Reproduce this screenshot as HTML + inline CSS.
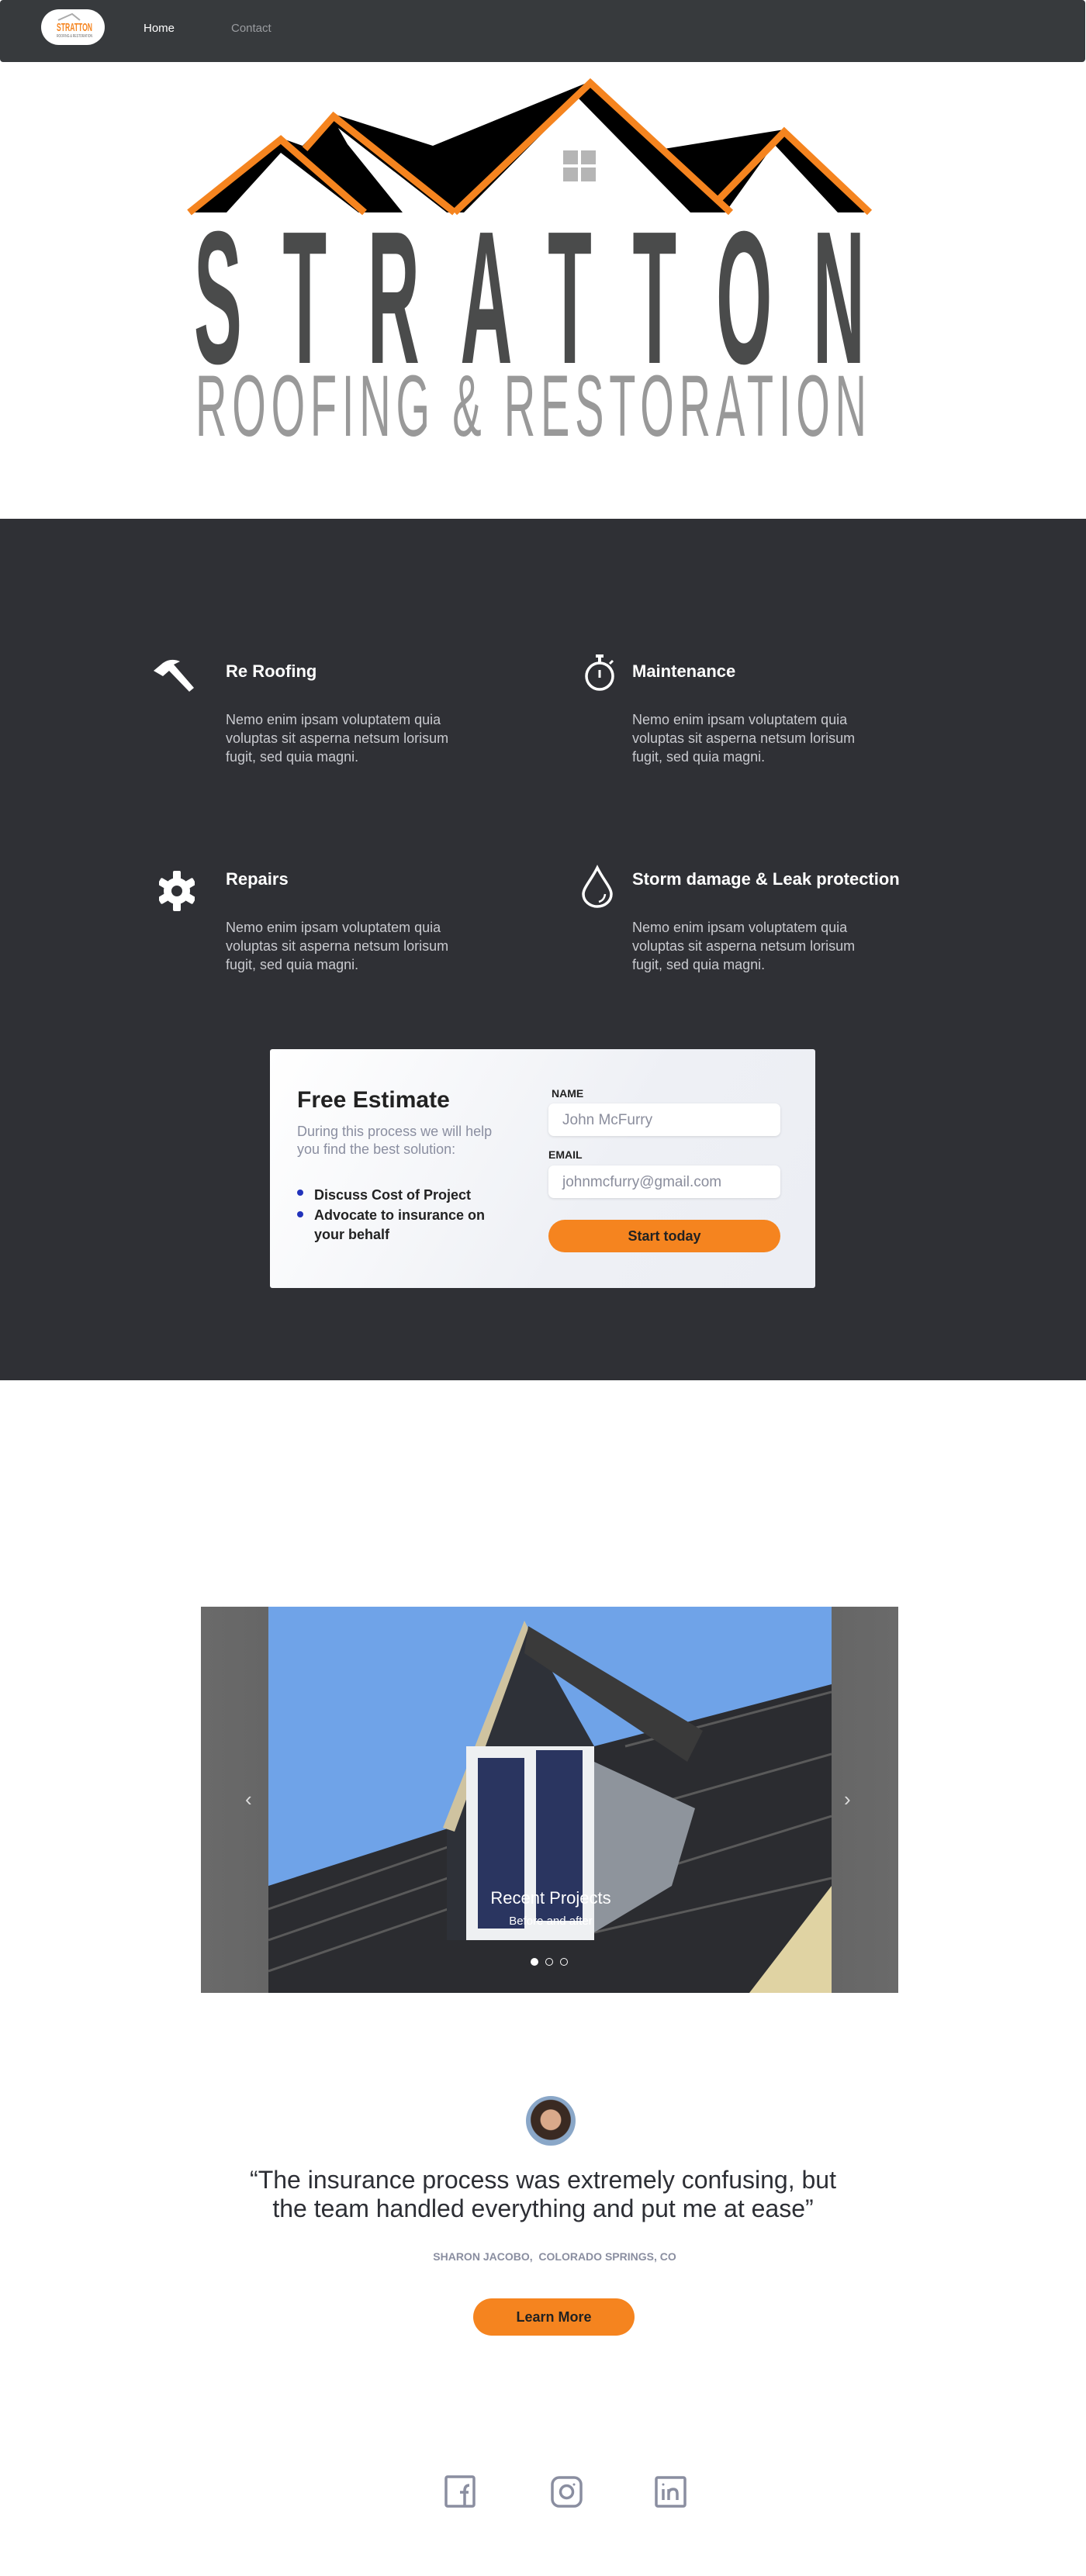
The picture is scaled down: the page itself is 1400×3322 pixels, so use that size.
<!DOCTYPE html>
<html><head><meta charset="utf-8">
<style>
*{margin:0;padding:0;box-sizing:border-box}
body{width:1400px;height:3322px;background:#fff;font-family:"Liberation Sans",sans-serif;position:relative;overflow:hidden}
.abs{position:absolute}
nav{position:absolute;left:0;top:0;width:1399px;height:80px;background:#373a3d;border-radius:4px}
.pill{position:absolute;left:53px;top:12px;width:82px;height:46px;background:#fff;border-radius:23px}
.dark{position:absolute;left:0;top:669px;width:1400px;height:1111px;background:#2f3035}
.t{position:absolute;color:#fff;font-weight:bold;font-size:22px}
.b{position:absolute;color:#c9cacf;font-size:18px;line-height:24px;width:322px}
.card{position:absolute;left:348px;top:1353px;width:703px;height:308px;border-radius:3px;background:linear-gradient(120deg,#ffffff 0%,#eef0f5 60%,#eceef4 100%)}
.inp{position:absolute;left:359px;width:299px;height:42px;background:#fff;border-radius:7px;box-shadow:0 1px 3px rgba(0,0,0,.12);color:#8a8d9c;font-size:19px;padding:11px 18px}
.lbl{position:absolute;font-size:14px;font-weight:bold;color:#222}
.btn{position:absolute;background:#f5841f;border-radius:22px;color:#222;font-weight:bold;text-align:center}
</style></head><body>
<nav>
<div class="pill"><svg width="82" height="46"><path d="M22 14 L40 6 L50 14" stroke="#aaa" stroke-width="2" fill="none"/><text x="20" y="28" font-size="15" font-weight="bold" fill="#f5841f" font-family="Liberation Sans Narrow,Liberation Sans" textLength="46" lengthAdjust="spacingAndGlyphs">STRATTON</text><text x="20" y="36" font-size="5" fill="#666" textLength="46" lengthAdjust="spacingAndGlyphs">ROOFING &amp; RESTORATION</text></svg></div>
<div class="abs" style="left:185px;top:28px;color:#fff;font-size:15px">Home</div>
<div class="abs" style="left:298px;top:28px;color:#9a9ca0;font-size:15px">Contact</div>
</nav>

<svg class="abs" style="left:0;top:0" width="1400" height="600">
<polygon points="244,274 362,178 390,188 430,147 558,188 761,105 856,192 1011,167 1121,274" fill="#000"/>
<polygon points="292,274 362,197 462,274" fill="#fff"/>
<polygon points="436,165 448,186 519,274 576,274" fill="#fff"/>
<polygon points="598,274 745,126 890,274" fill="#fff"/>
<polygon points="935,274 998,186 1080,274" fill="#fff"/>
<g fill="none" stroke="#f5841f" stroke-width="9" stroke-linejoin="miter">
<polyline points="244,274 362,180 470,274"/>
<polyline points="393,192 430,150 586,274"/>
<polyline points="586,274 761,107 942,274"/>
<polyline points="924,260 1011,170 1121,274"/>
</g>
<g fill="#b5b5b5"><rect x="726" y="194" width="19" height="18"/><rect x="749" y="194" width="19" height="18"/><rect x="726" y="216" width="19" height="18"/><rect x="749" y="216" width="19" height="18"/></g>
<g transform="translate(250,468) scale(0.38,1)"><text x="0" y="0" font-size="244" font-weight="bold" fill="#4a4b4b" textLength="2276" lengthAdjust="spacing">STRATTON</text></g>
<g transform="translate(252,562) scale(0.5,1)"><text x="0" y="0" font-size="112" fill="#999" textLength="1730" lengthAdjust="spacing">ROOFING &amp; RESTORATION</text></g>
</svg>

<div class="dark"></div>
<svg class="abs" style="left:190px;top:845px" width="70" height="60"><path d="M8 20 L20 10 Q30 3 42 8 L34 12 L60 42 L54 47 L28 20 L20 27 Z" fill="#fff"/></svg>
<svg class="abs" style="left:748px;top:842px" width="50" height="52"><circle cx="25" cy="30" r="17" stroke="#fff" stroke-width="3.5" fill="none"/><rect x="20" y="2" width="10" height="4" fill="#fff"/><rect x="23" y="5" width="4" height="8" fill="#fff"/><rect x="23.5" y="22" width="3" height="10" fill="#fff"/><path d="M38 14 l4 -4" stroke="#fff" stroke-width="3"/></svg>
<svg class="abs" style="left:205px;top:1122px" width="46" height="54"><g transform="translate(23,27)" fill="#fff"><circle r="17"/><g><rect x="-5" y="-26" width="10" height="12" rx="2"/><rect x="-5" y="14" width="10" height="12" rx="2"/><rect x="-5" y="-26" width="10" height="12" rx="2" transform="rotate(60)"/><rect x="-5" y="-26" width="10" height="12" rx="2" transform="rotate(120)"/><rect x="-5" y="-26" width="10" height="12" rx="2" transform="rotate(-60)"/><rect x="-5" y="-26" width="10" height="12" rx="2" transform="rotate(-120)"/></g><circle r="7" fill="#2f3035"/></g></svg>
<svg class="abs" style="left:748px;top:1115px" width="44" height="56"><path d="M22 4 C14 20 4 30 4 38 A18 16 0 0 0 40 38 C40 30 30 20 22 4 Z" stroke="#fff" stroke-width="3.5" fill="none"/><path d="M32 38 Q31 46 24 48" stroke="#fff" stroke-width="2.5" fill="none"/></svg>
<div class="t" style="left:291px;top:853px">Re Roofing</div>
<div class="b" style="left:291px;top:916px">Nemo enim ipsam voluptatem quia voluptas sit asperna netsum lorisum fugit, sed quia magni.</div>
<div class="t" style="left:815px;top:853px">Maintenance</div>
<div class="b" style="left:815px;top:916px">Nemo enim ipsam voluptatem quia voluptas sit asperna netsum lorisum fugit, sed quia magni.</div>
<div class="t" style="left:291px;top:1121px">Repairs</div>
<div class="b" style="left:291px;top:1184px">Nemo enim ipsam voluptatem quia voluptas sit asperna netsum lorisum fugit, sed quia magni.</div>
<div class="t" style="left:815px;top:1121px">Storm damage &amp; Leak protection</div>
<div class="b" style="left:815px;top:1184px">Nemo enim ipsam voluptatem quia voluptas sit asperna netsum lorisum fugit, sed quia magni.</div>

<div class="card">
<div class="abs" style="left:35px;top:49px;font-size:30px;font-weight:bold;color:#222">Free Estimate</div>
<div class="abs" style="left:35px;top:95px;font-size:18px;line-height:23px;color:#8a8ea0;width:265px">During this process we will help you find the best solution:</div>
<div class="abs" style="left:35px;top:181px;width:8px;height:8px;border-radius:50%;background:#2233bb"></div>
<div class="abs" style="left:35px;top:209px;width:8px;height:8px;border-radius:50%;background:#2233bb"></div>
<div class="abs" style="left:57px;top:175px;font-size:18px;font-weight:bold;color:#222;line-height:27px;width:260px">Discuss Cost of Project</div>
<div class="abs" style="left:57px;top:202px;font-size:18px;font-weight:bold;color:#222;line-height:25px;width:250px">Advocate to insurance on your behalf</div>
<div class="lbl" style="left:363px;top:49px">NAME</div>
<div class="inp" style="top:70px">John McFurry</div>
<div class="lbl" style="left:359px;top:128px">EMAIL</div>
<div class="inp" style="top:150px">johnmcfurry@gmail.com</div>
<div class="btn" style="left:359px;top:220px;width:299px;height:42px;line-height:42px;font-size:18px">Start today</div>
</div>

<div class="abs" style="left:259px;top:2072px;width:899px;height:498px;background:linear-gradient(90deg,#6a6a6a,#555 50%,#6a6a6a)"></div>
<svg class="abs" style="left:346px;top:2072px" width="726" height="498">
<rect width="726" height="498" fill="#6fa3e8"/>
<polygon points="0,360 0,498 726,498 726,100 420,180 250,280" fill="#2b2c30"/>
<g stroke="#5a5a5a" stroke-width="3"><line x1="0" y1="390" x2="260" y2="300"/><line x1="0" y1="430" x2="260" y2="340"/><line x1="0" y1="470" x2="260" y2="380"/><line x1="460" y1="180" x2="726" y2="110"/><line x1="480" y1="260" x2="726" y2="190"/><line x1="500" y1="340" x2="726" y2="270"/><line x1="420" y1="420" x2="726" y2="350"/></g>
<polygon points="230,280 330,20 420,180 420,430 230,430" fill="#2e3138"/>
<polygon points="225,285 330,18 335,28 240,290" fill="#cfc3a0"/>
<polygon points="335,25 560,160 540,200 330,60" fill="#3a3a3a"/>
<polygon points="420,200 550,260 520,360 420,420" fill="#8e949c"/>
<rect x="255" y="180" width="165" height="250" fill="#eef0f2"/>
<rect x="270" y="195" width="60" height="220" fill="#2a3560"/><rect x="345" y="185" width="60" height="220" fill="#2a3560"/>
<polygon points="620,498 726,360 726,498" fill="#e0d3a3"/>
</svg>
<div class="abs" style="left:560px;top:2435px;width:300px;text-align:center;color:#fff;font-size:22px">Recent Projects</div>
<div class="abs" style="left:560px;top:2469px;width:300px;text-align:center;color:#fff;font-size:15px">Before and after</div>
<div class="abs" style="left:684px;top:2525px;width:10px;height:10px;border-radius:50%;background:#fff"></div>
<div class="abs" style="left:703px;top:2525px;width:10px;height:10px;border-radius:50%;border:1.5px solid #fff"></div>
<div class="abs" style="left:722px;top:2525px;width:10px;height:10px;border-radius:50%;border:1.5px solid #fff"></div>
<div class="abs" style="left:316px;top:2305px;color:#ddd;font-size:26px">&#8249;</div>
<div class="abs" style="left:1088px;top:2305px;color:#ddd;font-size:26px">&#8250;</div>

<div class="abs" style="left:678px;top:2703px;width:64px;height:64px;border-radius:50%;background:radial-gradient(circle at 50% 48%,#d9a98a 0 28%,#3a2a22 30% 55%,#8aa7c8 57%)"></div>
<div class="abs" style="left:250px;top:2793px;width:900px;text-align:center;font-size:32px;line-height:37px;color:#2d2f35">“The insurance process was extremely confusing, but<br>the team handled everything and put me at ease”</div>
<div class="abs" style="left:400px;top:2902px;width:630px;text-align:center;font-size:14px;font-weight:bold;color:#8a8ea0">SHARON JACOBO,&nbsp; COLORADO SPRINGS, CO</div>
<div class="btn" style="left:610px;top:2964px;width:208px;height:48px;line-height:48px;font-size:18px;border-radius:24px">Learn More</div>

<svg class="abs" style="left:570px;top:3190px" width="320" height="50" fill="none" stroke="#8a8ea0" stroke-width="3.5">
<rect x="5" y="4" width="36" height="38" rx="2"/><path d="M29 42 V22 Q29 15 35 15 M23 24 H34" />
<rect x="142" y="5" width="37" height="37" rx="9"/><circle cx="160.5" cy="23.5" r="8"/><circle cx="170" cy="14" r="1.5" fill="#8a8ea0" stroke="none"/>
<rect x="276" y="5" width="37" height="37" rx="2"/><path d="M285 20 V34 M292 34 V20 M292 26 Q292 20 298 20 Q303 20 303 26 V34"/><circle cx="285" cy="14" r="1.5" fill="#8a8ea0" stroke="none"/>
</svg>
</body></html>
